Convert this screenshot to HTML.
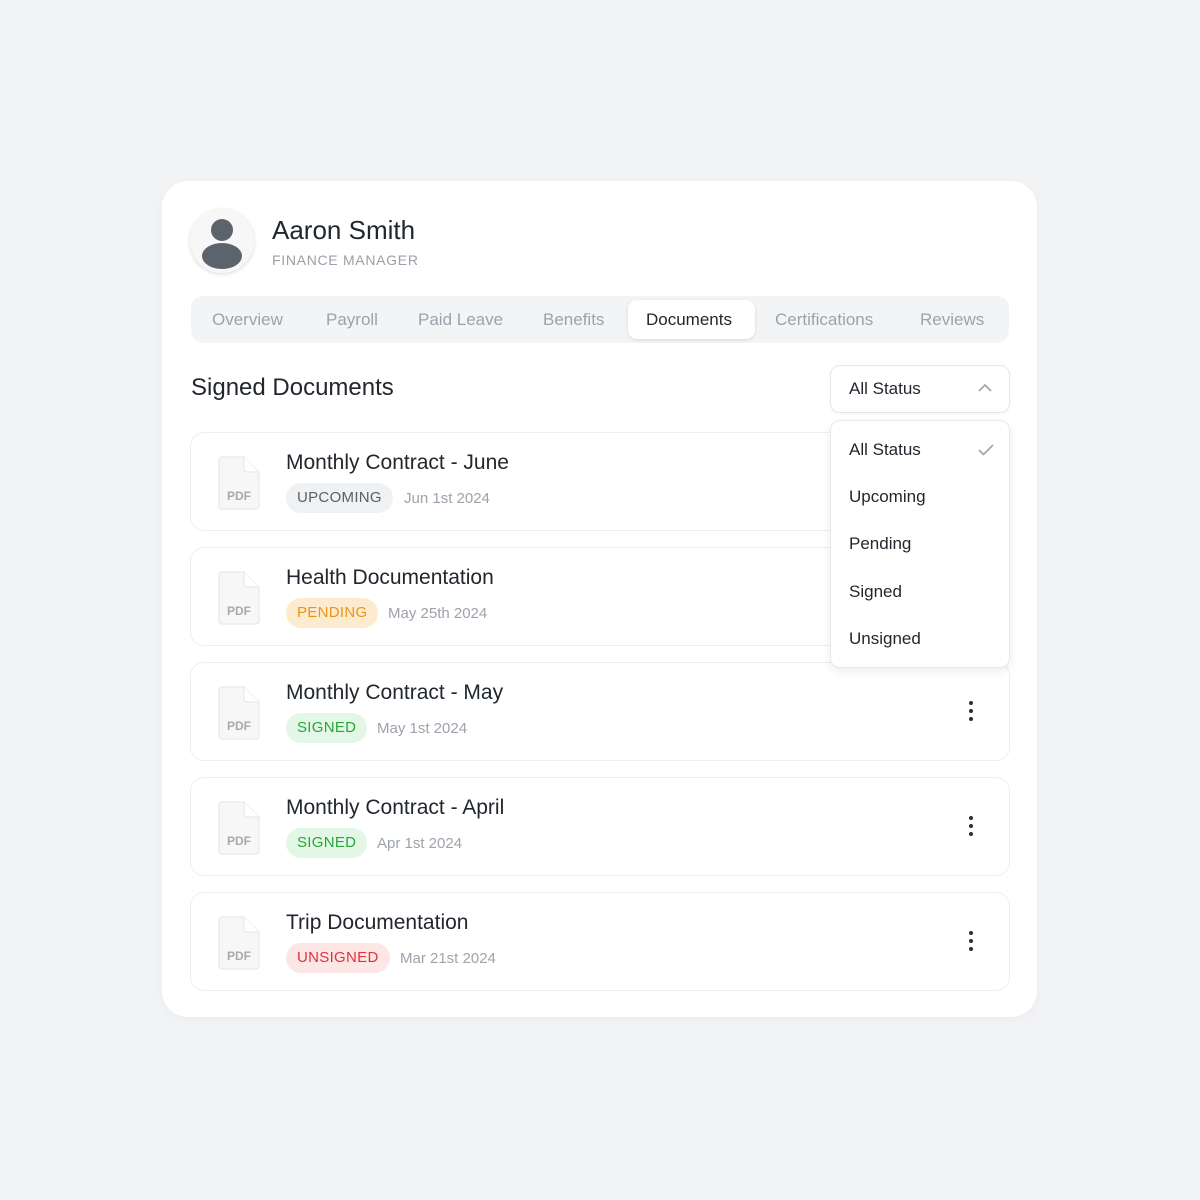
<!DOCTYPE html><html><head><style>
body{margin:0;width:1200px;height:1200px;background:#f2f3f5;font-family:"Liberation Sans",sans-serif;position:relative;overflow:hidden}
.card{position:absolute;left:162px;top:181px;width:875px;height:836px;background:#fff;border-radius:26px;box-shadow:0 2px 10px rgba(0,0,0,.03)}
.abs{position:absolute}
.av{left:190px;top:209px;width:64px;height:64px;border-radius:50%;background:#f7f7f8;box-shadow:0 1px 4px rgba(0,0,0,.15)}
.name{left:272px;top:215px;font-size:26px;color:#22272e}
.role{left:272px;top:252px;font-size:14px;color:#9aa0a6;letter-spacing:.7px}
.tabs{left:191px;top:296px;width:818px;height:47px;background:#f3f4f6;border-radius:12px}
.tab{position:absolute;top:310px;font-size:17px;color:#9ca3ab}
.act{left:628px;top:300px;width:127px;height:39px;background:#fff;border-radius:9px;box-shadow:0 1px 3px rgba(0,0,0,.12)}
.h{left:191px;top:374px;font-size:24px;color:#22272e}
.sel{left:830px;top:365px;width:178px;height:46px;border:1px solid #e5e7eb;border-radius:10px;background:#fff;box-shadow:0 1px 3px rgba(0,0,0,.05)}
.row{position:absolute;left:190px;width:818px;height:97px;border:1px solid #eceef0;border-radius:14px;background:#fff}
.row .t{position:absolute;left:95px;top:18px;font-size:21px;color:#22272e}
.badge{position:absolute;left:95px;top:50px;height:30px;line-height:30px;padding:0 11px;border-radius:15px;font-size:15px;letter-spacing:.3px}
.date{position:absolute;top:57px;font-size:15px;color:#9ca3ab}
.pdf{position:absolute;left:27px;top:21px}
.dots{position:absolute;left:778px;top:38px;width:4px}
.dots i{display:block;width:4px;height:4px;border-radius:2px;background:#2d3035;margin-bottom:4px}
.dd{left:830px;top:420px;width:178px;height:246px;background:#fff;border:1px solid #e8e9eb;border-radius:10px;box-shadow:0 4px 10px rgba(0,0,0,.07)}
.dd div{position:absolute;left:18px;font-size:17px;color:#22272e}
</style></head><body>
<div class="card"></div>
<div class="abs av"><svg width="64" height="64"><circle cx="32" cy="21" r="11" fill="#5c636c"/><ellipse cx="32" cy="47" rx="20" ry="13" fill="#5c636c"/></svg></div>
<div class="abs name">Aaron Smith</div>
<div class="abs role">FINANCE MANAGER</div>
<div class="abs tabs"></div>
<div class="abs act"></div>
<div class="tab" style="left:212px">Overview</div>
<div class="tab" style="left:326px">Payroll</div>
<div class="tab" style="left:418px">Paid Leave</div>
<div class="tab" style="left:543px">Benefits</div>
<div class="tab" style="left:646px;color:#22272e">Documents</div>
<div class="tab" style="left:775px">Certifications</div>
<div class="tab" style="left:920px">Reviews</div>
<div class="abs h">Signed Documents</div>

<div class="row" style="top:432px"><svg class="pdf" width="46" height="58"><path d="M4 3h22l15 15v34a3 3 0 0 1-3 3H4a3 3 0 0 1-3-3V6a3 3 0 0 1 3-3z" fill="#f7f7f8" stroke="#e3e4e6"/><path d="M26 3v12a3 3 0 0 0 3 3h12" fill="#fff" stroke="#e3e4e6"/><text x="9" y="46" font-size="12" font-weight="bold" fill="#a6aaaf" font-family="Liberation Sans">PDF</text></svg><div class="t">Monthly Contract - June</div><div class="badge" style="background:#f0f1f3;color:#5a6068">UPCOMING</div><div class="date" style="left:213px">Jun 1st 2024</div></div>
<div class="row" style="top:547px"><svg class="pdf" width="46" height="58"><path d="M4 3h22l15 15v34a3 3 0 0 1-3 3H4a3 3 0 0 1-3-3V6a3 3 0 0 1 3-3z" fill="#f7f7f8" stroke="#e3e4e6"/><path d="M26 3v12a3 3 0 0 0 3 3h12" fill="#fff" stroke="#e3e4e6"/><text x="9" y="46" font-size="12" font-weight="bold" fill="#a6aaaf" font-family="Liberation Sans">PDF</text></svg><div class="t">Health Documentation</div><div class="badge" style="background:#fdebcf;color:#e8951a">PENDING</div><div class="date" style="left:197px">May 25th 2024</div></div>
<div class="row" style="top:662px"><svg class="pdf" width="46" height="58"><path d="M4 3h22l15 15v34a3 3 0 0 1-3 3H4a3 3 0 0 1-3-3V6a3 3 0 0 1 3-3z" fill="#f7f7f8" stroke="#e3e4e6"/><path d="M26 3v12a3 3 0 0 0 3 3h12" fill="#fff" stroke="#e3e4e6"/><text x="9" y="46" font-size="12" font-weight="bold" fill="#a6aaaf" font-family="Liberation Sans">PDF</text></svg><div class="t">Monthly Contract - May</div><div class="badge" style="background:#e3f7e6;color:#2aa53a">SIGNED</div><div class="date" style="left:186px">May 1st 2024</div><div class="dots"><i></i><i></i><i></i></div></div>
<div class="row" style="top:777px"><svg class="pdf" width="46" height="58"><path d="M4 3h22l15 15v34a3 3 0 0 1-3 3H4a3 3 0 0 1-3-3V6a3 3 0 0 1 3-3z" fill="#f7f7f8" stroke="#e3e4e6"/><path d="M26 3v12a3 3 0 0 0 3 3h12" fill="#fff" stroke="#e3e4e6"/><text x="9" y="46" font-size="12" font-weight="bold" fill="#a6aaaf" font-family="Liberation Sans">PDF</text></svg><div class="t">Monthly Contract - April</div><div class="badge" style="background:#e3f7e6;color:#2aa53a">SIGNED</div><div class="date" style="left:186px">Apr 1st 2024</div><div class="dots"><i></i><i></i><i></i></div></div>
<div class="row" style="top:892px"><svg class="pdf" width="46" height="58"><path d="M4 3h22l15 15v34a3 3 0 0 1-3 3H4a3 3 0 0 1-3-3V6a3 3 0 0 1 3-3z" fill="#f7f7f8" stroke="#e3e4e6"/><path d="M26 3v12a3 3 0 0 0 3 3h12" fill="#fff" stroke="#e3e4e6"/><text x="9" y="46" font-size="12" font-weight="bold" fill="#a6aaaf" font-family="Liberation Sans">PDF</text></svg><div class="t">Trip Documentation</div><div class="badge" style="background:#fde6e6;color:#e0323a">UNSIGNED</div><div class="date" style="left:209px">Mar 21st 2024</div><div class="dots"><i></i><i></i><i></i></div></div>

<div class="abs sel"><div class="abs" style="left:18px;top:13px;font-size:17px;color:#22272e">All Status</div><svg class="abs" style="left:147px;top:17px" width="14" height="10"><path d="M1 8l6-6 6 6" fill="none" stroke="#9ca3ab" stroke-width="1.6"/></svg></div>
<div class="abs dd">
<div style="top:19px">All Status</div><svg class="abs" style="left:147px;top:23px" width="16" height="12"><path d="M1 6l4.5 4.5L15 1" fill="none" stroke="#9ca3ab" stroke-width="1.6"/></svg>
<div style="top:66px">Upcoming</div><div style="top:113px">Pending</div><div style="top:161px">Signed</div><div style="top:208px">Unsigned</div>
</div>
</body></html>
